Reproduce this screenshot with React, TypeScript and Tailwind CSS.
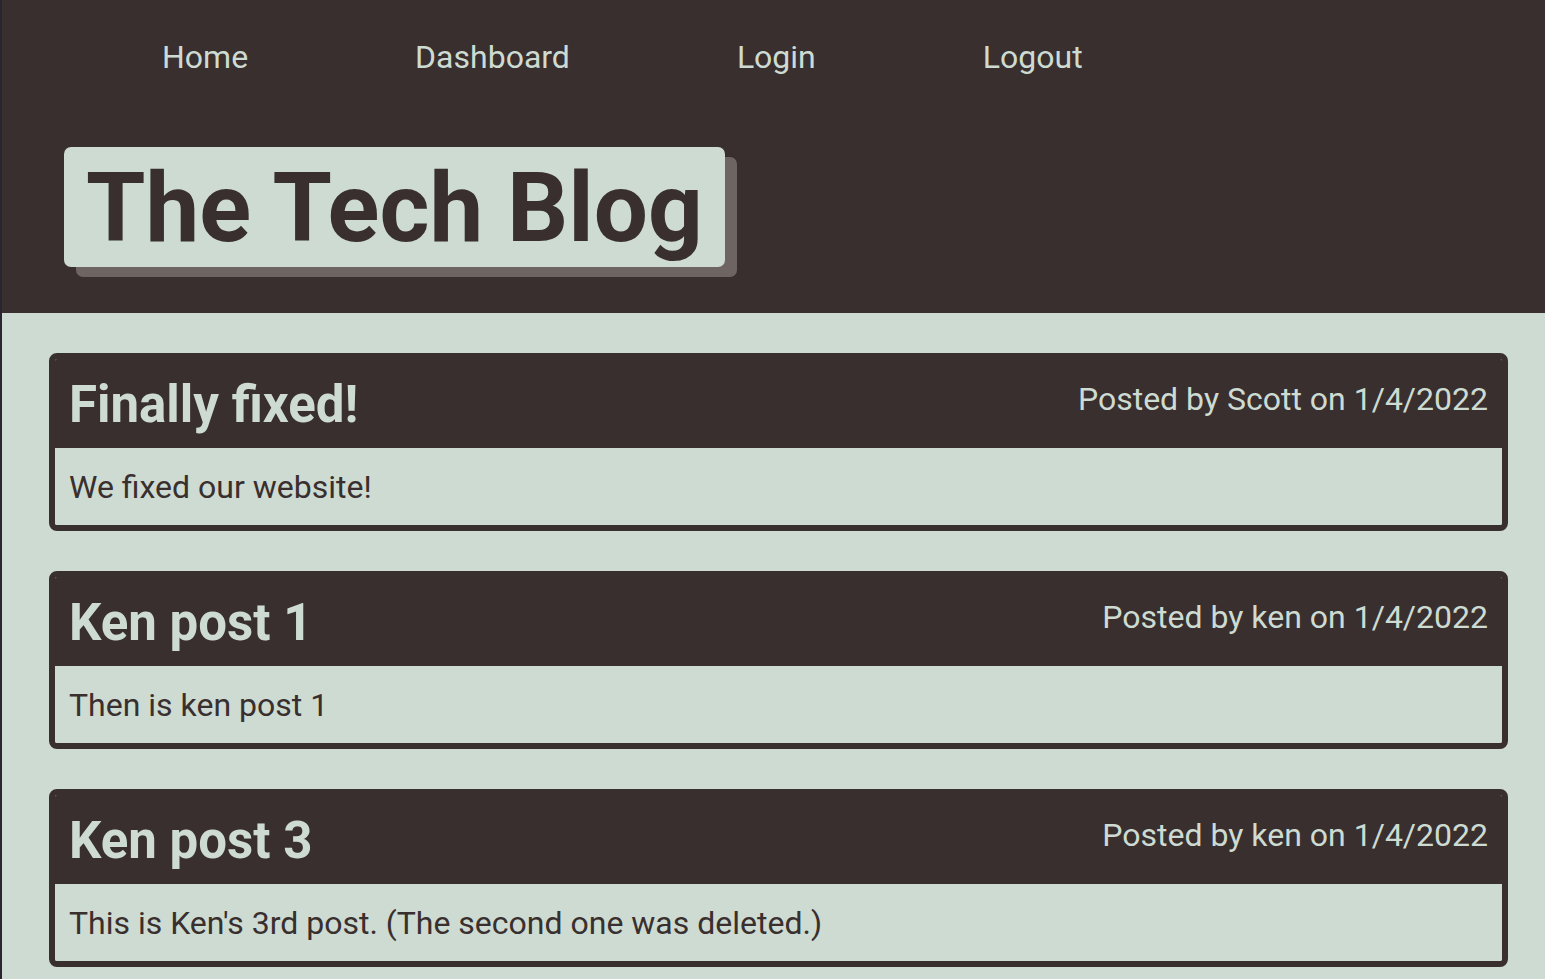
const posts = [
  { title: "Finally fixed!", author: "Scott", date: "1/4/2022", body: "We fixed our website!" },
  { title: "Ken post 1", author: "ken", date: "1/4/2022", body: "Then is ken post 1" },
  { title: "Ken post 3", author: "ken", date: "1/4/2022", body: "This is Ken's 3rd post. (The second one was deleted.)" },
];

const navLinks = ["Home", "Dashboard", "Login", "Logout"];

export default function App() {
  return (
    <div className="flex min-h-[979px] bg-[#cddbd2] font-['Roboto',sans-serif]">
      {/* sliver of window behind */}
      <div className="w-[2px] shrink-0 bg-[#2b2530]" />
      <div className="flex-1">
        <header className="bg-[#392f2e] h-[313px] pt-[33px]">
          <nav className="flex gap-[167px] pl-[160px]">
            {navLinks.map((link) => (
              <a key={link} href="#" className="text-[32px] leading-[48px] text-[#cddbd2]">
                {link}
              </a>
            ))}
          </nav>
          <div className="mt-[66px] ml-[62px] inline-flex">
            <h1 className="h-[120px] rounded-[7px] bg-[#cddbd2] px-[22px] text-[96px] leading-[122px] font-bold text-[#392f2e] shadow-[12px_10px_0_#6e6563]">
              The Tech Blog
            </h1>
          </div>
        </header>

        <main className="flex flex-col gap-[40px] pt-[40px] pl-[47px] pr-[37px] pb-[40px]">
          {posts.map((post) => (
            <article key={post.title} className="rounded-[8px] border-[6px] border-[#392f2e] overflow-hidden">
              <div className="flex h-[89px] items-start justify-between bg-[#392f2e] px-[14px] text-[#cddbd2]">
                <h2 className="pt-[16px] text-[51px] leading-[60px] font-bold">{post.title}</h2>
                <span className="pt-[18px] text-[32px] leading-[44px]">
                  Posted by {post.author} on {post.date}
                </span>
              </div>
              <div className="h-[77px] bg-[#cddbd2] px-[14px] pt-[17px] text-[32px] leading-[44px] text-[#392f2e]">
                <p>{post.body}</p>
              </div>
            </article>
          ))}
        </main>
      </div>
    </div>
  );
}
